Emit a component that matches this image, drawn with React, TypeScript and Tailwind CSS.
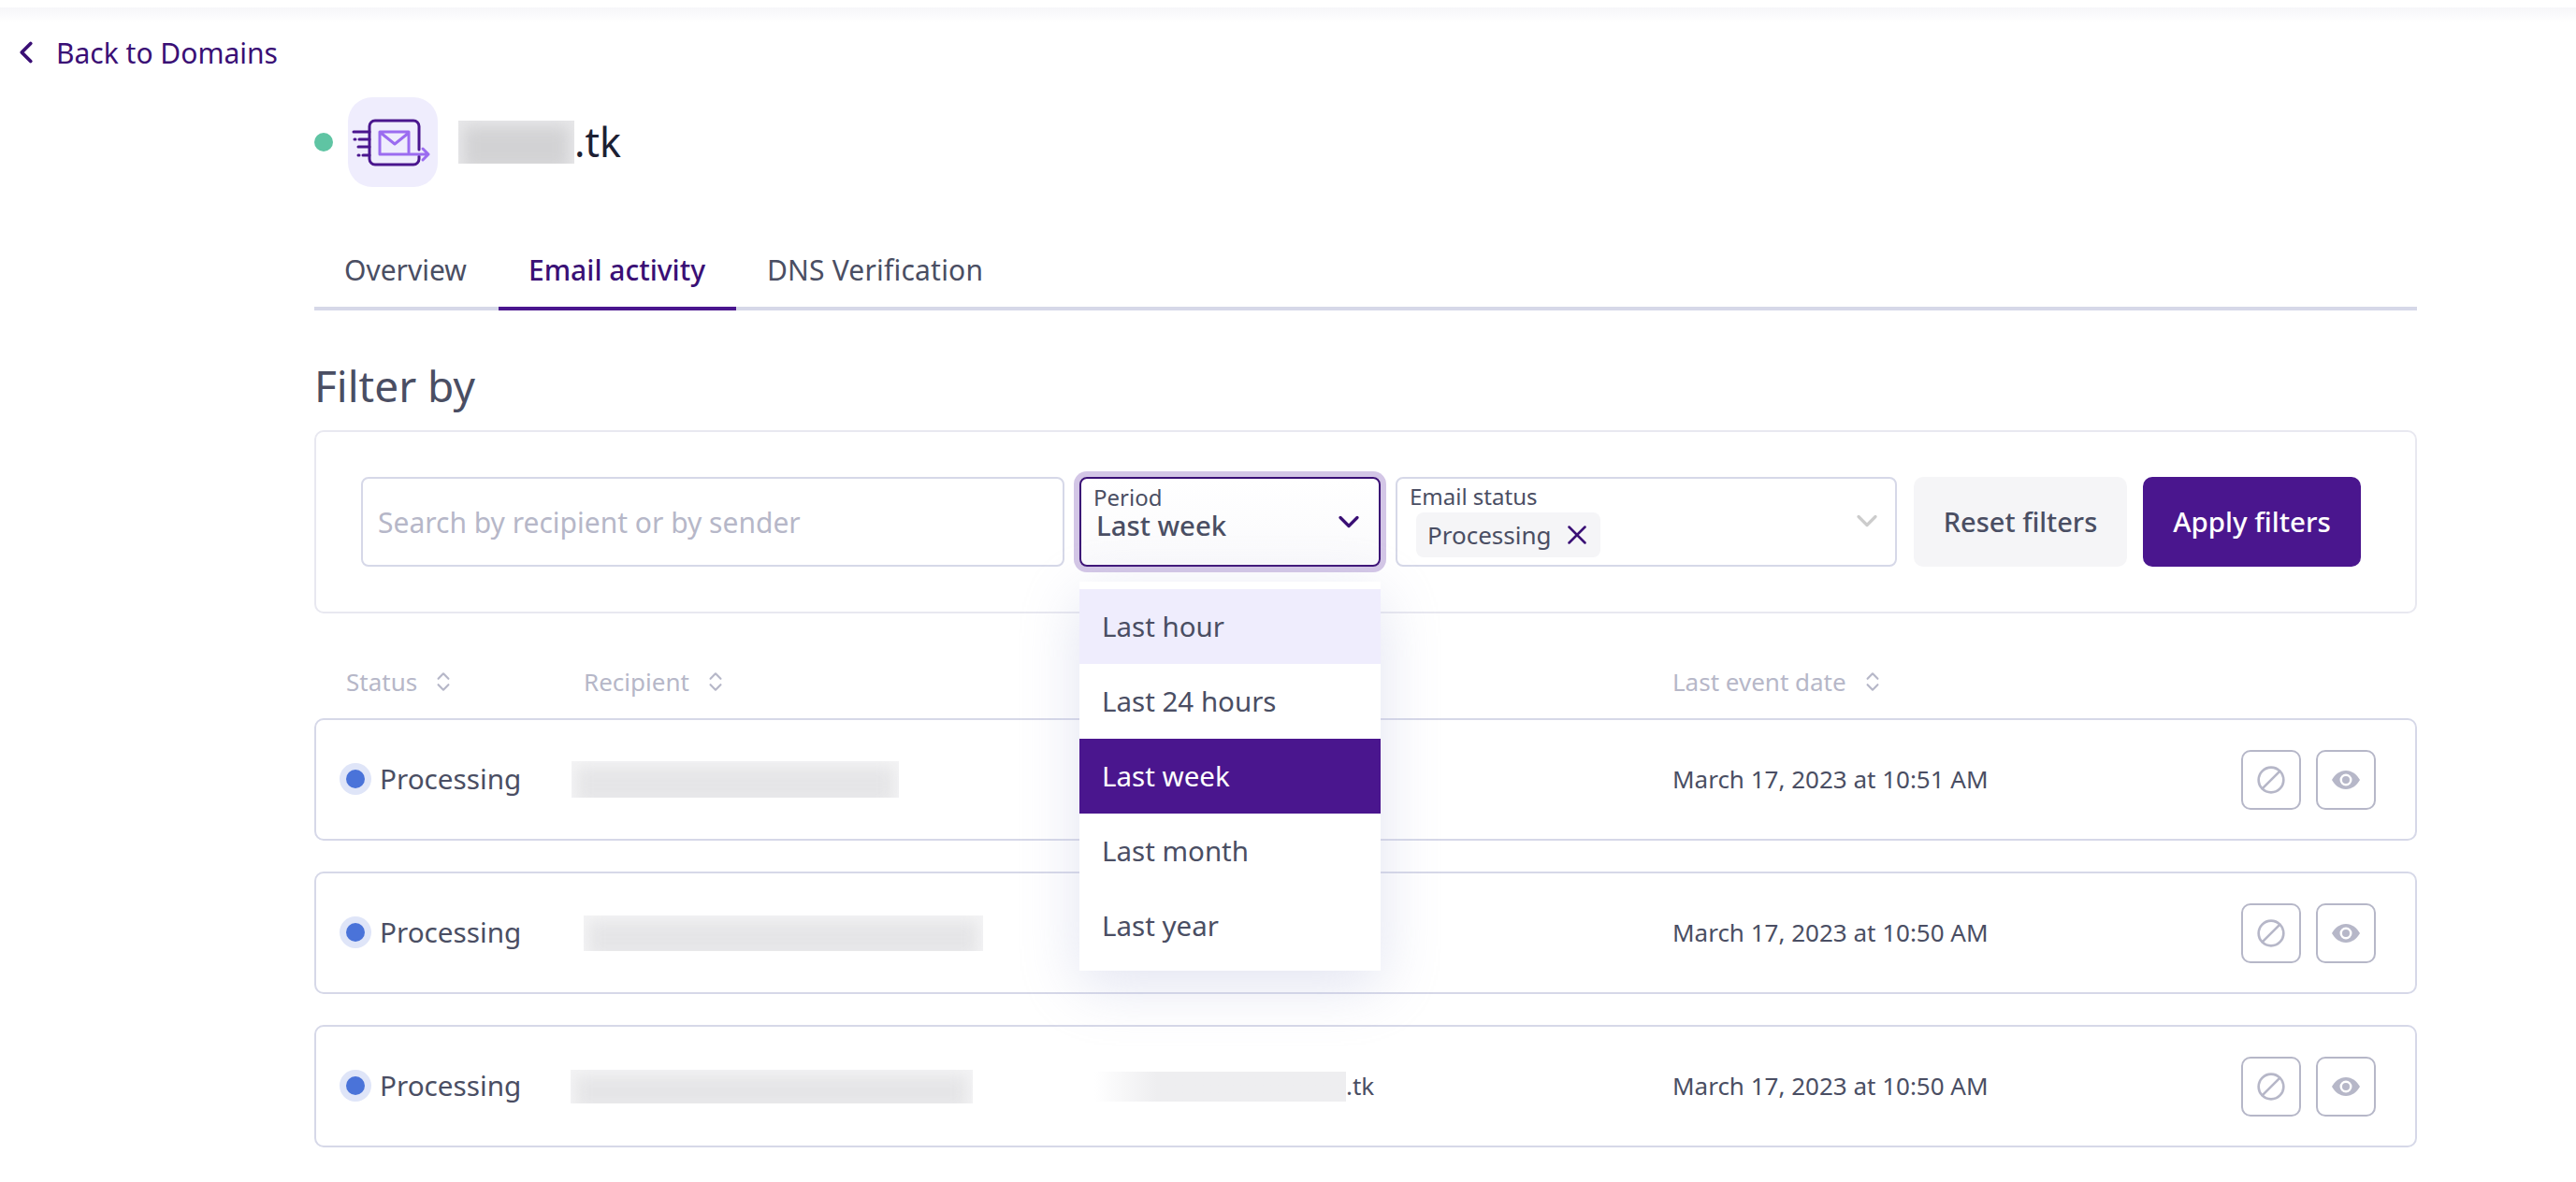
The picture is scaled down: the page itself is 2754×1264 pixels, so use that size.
import React from 'react';
import { ChevronDown, ChevronLeft, ChevronsUpDown, Ban, X } from 'lucide-react';

const periods = ['Last hour', 'Last 24 hours', 'Last week', 'Last month', 'Last year'];

function Blurred({ className, dark }: { className: string; dark?: boolean }) {
  return (
    <div className={`overflow-hidden shrink-0 ${dark ? 'bg-[#e8e8ea]' : 'bg-[#f4f4f5]'} ${className}`}>
      <div className={`h-full m-[6px] blur-[8px] ${dark ? 'bg-[#d2d2d4]' : 'bg-[#e5e5e7]'}`} />
    </div>
  );
}

function DomainIcon() {
  return (
    <svg viewBox="0 0 96 96" className="w-[96px] h-[96px]" fill="none" strokeLinecap="round" strokeLinejoin="round">
      <path d="M76 56V31a6 6 0 0 0-6-6H29a6 6 0 0 0-6 6v35a6 6 0 0 0 6 6h41a6 6 0 0 0 6-6v-3" stroke="#4a168e" strokeWidth="3" />
      <path d="M6 37h17M7 45h1M12 45h11M11 53h12M11 62h1M16 62h7" stroke="#4a168e" strokeWidth="3" />
      <path d="M34 61V37h31v22M35 38l15 12 15-12M34 61h52M80 55l6 6-6 6" stroke="#9b6cf0" strokeWidth="3" />
    </svg>
  );
}

function EyeIcon() {
  return (
    <svg viewBox="0 0 30 20" className="w-[30px] h-[20px]">
      <path fillRule="evenodd" fill="#b6b7c8" d="M15 0c6.500 0 11.800 4.200 15 10-3.200 5.800-8.500 10-15 10S3.200 15.800 0 10C3.200 4.200 8.500 0 15 0zm0 3.500a6.500 6.500 0 1 0 0 13 6.500 6.500 0 0 0 0-13z" />
      <circle cx="15" cy="10" r="4" fill="#b6b7c8" />
    </svg>
  );
}

function SortHeader({ label, className }: { label: string; className: string }) {
  return (
    <div className={`flex items-center gap-[15px] text-[26px] text-[#b6b7c8] ${className}`}>
      <span>{label}</span>
      <ChevronsUpDown className="w-[26px] h-[26px]" strokeWidth={2} />
    </div>
  );
}

function Row({ date, children }: { date: string; children: React.ReactNode }) {
  return (
    <div className="h-[131px] border-2 border-[#d6d8e8] rounded-[10px] flex items-center pl-[25px] pr-[42px] bg-white">
      <div className="w-[247px] flex items-center gap-[9px]">
        <span className="w-[34px] h-[34px] rounded-full bg-[#dfe5f8] flex items-center justify-center">
          <span className="w-[20px] h-[20px] rounded-full bg-[#4a73d9]" />
        </span>
        <span className="text-[29.700px] text-[#4a4e63]">Processing</span>
      </div>
      <div className="w-[1178px] flex items-center">{children}</div>
      <div className="flex-1 text-[26px] text-[#4a4e63]">{date}</div>
      <div className="flex gap-[16px]">
        <button className="w-[64px] h-[64px] border-2 border-[#b6b7c8] rounded-[10px] flex items-center justify-center">
          <Ban className="w-[32px] h-[32px] text-[#b6b7c8] -scale-x-100" strokeWidth={2} />
        </button>
        <button className="w-[64px] h-[64px] border-2 border-[#b6b7c8] rounded-[10px] flex items-center justify-center">
          <EyeIcon />
        </button>
      </div>
    </div>
  );
}

export default function App() {
  return (
    <div className="relative w-[2754px] h-[1264px] overflow-hidden bg-white font-['Noto_Sans',sans-serif]">
      {/* top bar shadow */}
      <div className="h-[8px] bg-white" />
      <div className="h-[16px] bg-gradient-to-b from-[#f6f6f9] to-white" />

      <a className="h-[64px] flex items-center pl-[9px] gap-[13px] text-[30px] text-[#3a0f75]">
        <ChevronLeft className="w-[38px] h-[38px]" strokeWidth={2.4} />
        <span>Back to Domains</span>
      </a>

      <div className="ml-[336px] w-[2248px]">
        <div className="mt-[16px] h-[96px] flex items-center">
          <span className="w-[20px] h-[20px] rounded-full bg-[#5fc4a3]" />
          <div className="ml-[16px] w-[96px] h-[96px] rounded-[26px] bg-[#efedfd]">
            <DomainIcon />
          </div>
          <Blurred dark className="ml-[22px] w-[124px] h-[46px]" />
          <span className="text-[43px] text-[#1c2033]">.tk</span>
        </div>

        {/* tabs */}
        <div className="mt-[48px] h-[84px] border-b-4 border-[#d6d8e8] flex text-[30px]">
          <div className="w-[197px] h-[84px] pl-[32px] flex items-center text-[#4a4e63] border-b-4 border-transparent">Overview</div>
          <div className="w-[254px] h-[84px] pl-[32px] flex items-center font-medium text-[#3a0f75] border-b-4 border-[#4a168e]">Email activity</div>
          <div className="h-[84px] px-[33px] flex items-center text-[#4a4e63] tracking-[0.2px] border-b-4 border-transparent">DNS Verification</div>
        </div>

        <div className="h-[128px] pt-[32px] flex items-center text-[46px] text-[#4a4e63]">Filter by</div>

        {/* filters */}
        <div className="h-[196px] border-2 border-[#e8e8f0] rounded-[10px] pl-[48px] flex items-center">
          <input
            placeholder="Search by recipient or by sender"
            className="w-[752px] h-[96px] border-2 border-[#d6d8e8] rounded-[8px] px-[16px] text-[30px] outline-none placeholder:text-[#b6b7c8]"
          />
          <div className="relative ml-[16px] w-[322px] h-[96px]">
            <div className="h-full border-2 border-[#3a0f75] rounded-[8px] ring-[6px] ring-[#d3c6e6] pl-[13px] pr-[14px] flex items-center justify-between bg-gradient-to-b from-white to-[#fafafc]">
              <div className="self-start pt-[5px]">
                <div className="text-[24px] leading-[30px] text-[#4a4e63]">Period</div>
                <div className="ml-[3px] text-[29.300px] leading-[30px] font-medium text-[#4a4e63]">Last week</div>
              </div>
              <ChevronDown className="w-[36px] h-[36px] text-[#3a0f75]" strokeWidth={2.2} />
            </div>
            <div className="absolute z-10 left-0 top-[112px] w-[322px] py-[8px] bg-white shadow-[0_16px_60px_rgba(190,196,225,0.45)]">
              {periods.map((p) => (
                <div
                  key={p}
                  className={`h-[80px] pl-[24px] flex items-center text-[29.500px] ${
                    p === 'Last hour'
                      ? 'bg-[#efedfd] text-[#4a4e63]'
                      : p === 'Last week'
                        ? 'bg-[#4a168e] text-white'
                        : 'text-[#4a4e63]'
                  }`}
                >
                  {p}
                </div>
              ))}
            </div>
          </div>
          <div className="ml-[16px] w-[536px] h-[96px] border-2 border-[#d6d8e8] rounded-[8px] pl-[13px] pr-[12px] flex justify-between">
            <div>
              <div className="text-[24px] leading-[30px] mt-[4px] text-[#4a4e63]">Email status</div>
              <div className="ml-[7px] mt-[2px] w-[197px] h-[48px] rounded-[8px] bg-[#f5f5f7] pl-[12px] flex items-center gap-[10px] text-[26px] text-[#4a4e63]">
                <span>Processing</span>
                <X className="w-[34px] h-[34px] text-[#3a0f75]" strokeWidth={1.8} />
              </div>
            </div>
            <ChevronDown className="w-[36px] h-[36px] text-[#cccccc] mt-[27px]" strokeWidth={2.2} />
          </div>
          <button className="ml-[18px] w-[228px] h-[96px] rounded-[10px] bg-[#f5f5f7] text-[29px] font-medium text-[#4a4e63]">Reset filters</button>
          <button className="ml-[17px] w-[233px] h-[96px] rounded-[10px] bg-[#4a168e] text-[29.500px] font-medium text-white">Apply filters</button>
        </div>

        {/* table head */}
        <div className="h-[112px] pt-[34px] flex items-center">
          <SortHeader label="Status" className="ml-[34px] w-[254px]" />
          <SortHeader label="Recipient" className="w-[1164px]" />
          <SortHeader label="Last event date" className="" />
        </div>

        <div className="flex flex-col gap-[33px]">
          <Row date="March 17, 2023 at 10:51 AM">
            <Blurred className="ml-[1px] w-[350px] h-[39px]" />
          </Row>
          <Row date="March 17, 2023 at 10:50 AM">
            <Blurred className="ml-[14px] w-[427px] h-[38px]" />
          </Row>
          <Row date="March 17, 2023 at 10:50 AM">
            <Blurred className="w-[430px] h-[36px]" />
            <div className="ml-[130px] w-[269px] h-[32px] shrink-0 bg-gradient-to-r from-white to-[#eeeef0] to-[25%]" />
            <span className="text-[26px] text-[#4a4e63]">.tk</span>
          </Row>
        </div>
      </div>
    </div>
  );
}
